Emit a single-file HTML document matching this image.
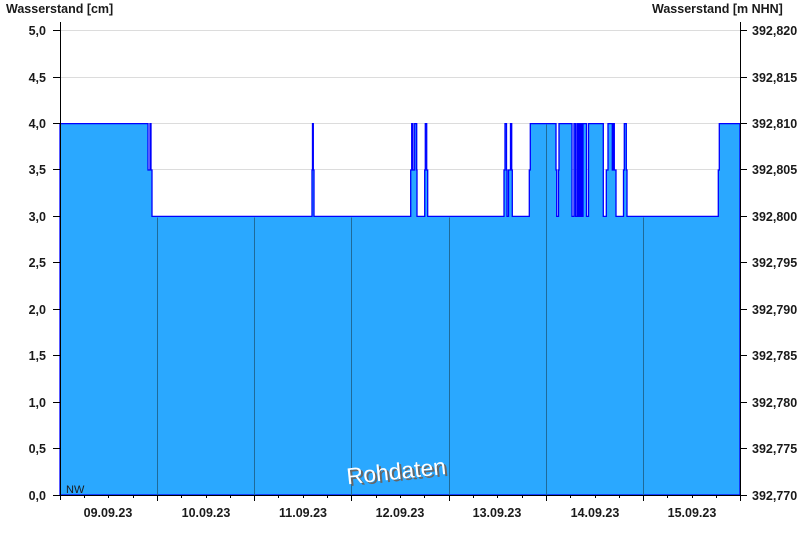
<!DOCTYPE html>
<html><head><meta charset="utf-8"><style>
html,body{margin:0;padding:0;background:#fff;}
svg{display:block;font-family:"Liberation Sans",Arial,sans-serif;}
</style></head><body>
<svg width="800" height="550" viewBox="0 0 800 550" xmlns="http://www.w3.org/2000/svg">
<g stroke="#dcdcdc" stroke-width="1">
<line x1="61" x2="740" y1="30.5" y2="30.5"/>
<line x1="61" x2="740" y1="77.5" y2="77.5"/>
<line x1="61" x2="740" y1="123.5" y2="123.5"/>
<line x1="61" x2="740" y1="169.5" y2="169.5"/>
</g>
<path fill="#2aa8ff" stroke="#0000ff" stroke-width="1.3" d="M60,495 V123.6 H148 V170 H150 V123.6 H151 V170 H152 V216.4 H312 V170 H312.5 V123.6 H313.3 V170 H314 V216.4 H410.7 V170 H411.7 V123.6 H413 V170 H414.7 V123.6 H416.7 V170 H417 V216.4 H424.7 V170 H425.3 V123.6 H426.7 V170 H427.7 V216.4 H504 V170 H505 V123.6 H506.5 V170 H507 V216.4 H508.5 V170 H510.5 V123.6 H511.7 V170 H512.3 V216.4 H529.3 V170 H530.3 V123.6 H556 V170 H556.7 V216.4 H558.5 V170 H559 V123.6 H572 V216.4 H574 V123.6 H575.5 V216.4 H577 V123.6 H578 V216.4 H579 V123.6 H580 V216.4 H581 V123.6 H582 V216.4 H583 V123.6 H586.5 V216.4 H588.5 V123.6 H603.3 V216.4 H606.3 V170 H608 V123.6 H612.3 V170 H613.3 V123.6 H614.3 V170 H616 V216.4 H623.5 V170 H624.3 V123.6 H626.3 V170 H627 V216.4 H718.3 V170 H719.3 V123.6 H740 V495 Z"/>
<g stroke="#1e6a9a" stroke-width="1">
<line x1="157.5" x2="157.5" y1="217.5" y2="495"/>
<line x1="254.5" x2="254.5" y1="217.5" y2="495"/>
<line x1="351.5" x2="351.5" y1="217.5" y2="495"/>
<line x1="449.5" x2="449.5" y1="217.5" y2="495"/>
<line x1="546.5" x2="546.5" y1="124.5" y2="495"/>
<line x1="643.5" x2="643.5" y1="217.5" y2="495"/>
</g>
<g stroke="#000" stroke-width="1">
<line x1="60.5" x2="60.5" y1="22" y2="500"/>
<line x1="740.5" x2="740.5" y1="22" y2="495"/>
<line x1="53" x2="745" y1="495.5" y2="495.5"/>
<path d="M53 30.5h7M53 77.5h7M53 123.5h7M53 169.5h7M53 216.5h7M53 262.5h7M53 309.5h7M53 355.5h7M53 402.5h7M53 448.5h7"/>
<path d="M740 30.5h7M740 77.5h7M740 123.5h7M740 169.5h7M740 216.5h7M740 262.5h7M740 309.5h7M740 355.5h7M740 402.5h7M740 448.5h7M740 495.5h7"/>
<path d="M157.5 495v6M254.5 495v6M351.5 495v6M449.5 495v6M546.5 495v6M643.5 495v6M740.5 495v6"/>
<path d="M84.5 495v3M108.5 495v3M133.5 495v3M181.5 495v3M206.5 495v3M230.5 495v3M278.5 495v3M303.5 495v3M327.5 495v3M376.5 495v3M400.5 495v3M424.5 495v3M473.5 495v3M497.5 495v3M522.5 495v3M570.5 495v3M595.5 495v3M619.5 495v3M667.5 495v3M692.5 495v3M716.5 495v3"/>
</g>
<g font-size="12.5" font-weight="bold" fill="#1a1a1a">
<text x="6" y="13">Wasserstand [cm]</text>
<text x="652" y="13">Wasserstand [m NHN]</text>
<g text-anchor="end">
<text x="46" y="35">5,0</text><text x="46" y="82">4,5</text><text x="46" y="128">4,0</text><text x="46" y="174">3,5</text><text x="46" y="221">3,0</text><text x="46" y="267">2,5</text><text x="46" y="314">2,0</text><text x="46" y="360">1,5</text><text x="46" y="407">1,0</text><text x="46" y="453">0,5</text><text x="46" y="500">0,0</text>
</g>
<g>
<text x="752" y="35">392,820</text><text x="752" y="82">392,815</text><text x="752" y="128">392,810</text><text x="752" y="174">392,805</text><text x="752" y="221">392,800</text><text x="752" y="267">392,795</text><text x="752" y="314">392,790</text><text x="752" y="360">392,785</text><text x="752" y="407">392,780</text><text x="752" y="453">392,775</text><text x="752" y="500">392,770</text>
</g>
<g text-anchor="middle">
<text x="108" y="517">09.09.23</text><text x="206" y="517">10.09.23</text><text x="303" y="517">11.09.23</text><text x="400" y="517">12.09.23</text><text x="497" y="517">13.09.23</text><text x="595" y="517">14.09.23</text><text x="692" y="517">15.09.23</text>
</g>
</g>
<text x="66" y="493" font-size="11" fill="#1a1a1a">NW</text>
<g transform="rotate(-6 398 468)" font-size="23">
<text x="348" y="481" fill="#666">Rohdaten</text>
<text x="346" y="479" fill="#fff">Rohdaten</text>
</g>
</svg>
</body></html>
